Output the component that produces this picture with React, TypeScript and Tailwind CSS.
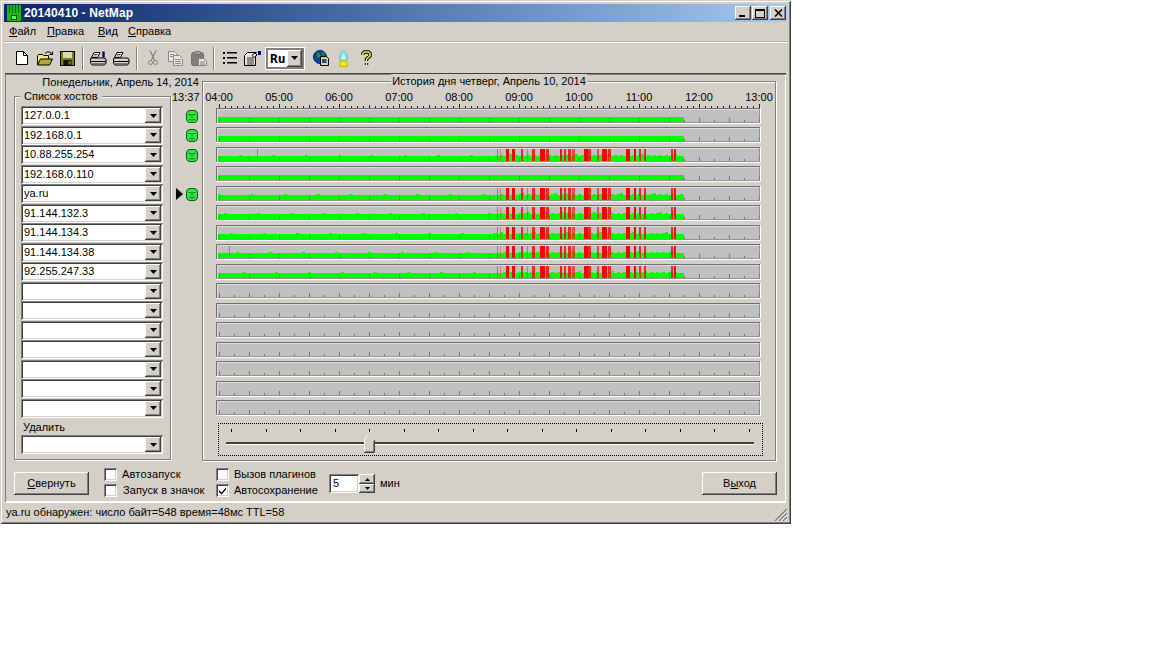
import React from 'react';

const raised = "shadow-[inset_-1px_-1px_0_#404040,inset_1px_1px_0_#ffffff,inset_-2px_-2px_0_#808080,inset_2px_2px_0_#d4d0c8]";
const sunken = "shadow-[inset_1px_1px_0_#808080,inset_-1px_-1px_0_#ffffff,inset_2px_2px_0_#404040,inset_-2px_-2px_0_#d4d0c8]";
const etched = "border border-[#808080] shadow-[inset_1px_1px_0_#ffffff,1px_1px_0_#ffffff]";

const hosts = ["127.0.0.1", "192.168.0.1", "10.88.255.254", "192.168.0.110", "ya.ru", "91.144.132.3", "91.144.134.3", "91.144.134.38", "92.255.247.33", "", "", "", "", "", "", ""];
const hours = ["04:00", "05:00", "06:00", "07:00", "08:00", "09:00", "10:00", "11:00", "12:00", "13:00"];

// [x, width, opacity], x is in window pixels
const spikes: number[][] = [
    [497, 1, 0.5], [500, 1, 0.35], [506, 3, 1], [512, 3, 1], [521, 2, 0.8], [527, 1, 0.4], [532, 3, 0.8],
    [540, 5, 1], [546, 3, 0.8], [560, 2, 0.9], [564, 2, 0.8], [568, 3, 0.8], [572, 3, 0.6], [584, 4, 1],
    [588, 3, 0.8], [597, 2, 0.6], [602, 5, 1], [608, 3, 0.8], [626, 4, 1], [634, 2, 1], [639, 2, 0.8],
    [644, 2, 0.8], [671, 2, 0.8], [674, 2, 0.9],
];

const rows = [
    { active: true, busy: false }, { active: true, busy: false }, { active: true, busy: true, extra: 257 }, { active: true, busy: false, noFace: true },
    { active: true, busy: true, mark: true }, { active: true, busy: true, noFace: true }, { active: true, busy: true, noFace: true }, { active: true, busy: true, extra: 229, noFace: true },
    { active: true, busy: true, noFace: true },
    {}, {}, {}, {}, {}, {}, {},
] as { active?: boolean; busy?: boolean; extra?: number; mark?: boolean; noFace?: boolean }[];

function Arrow() {
    return (
        <svg width="7" height="4" viewBox="0 0 7 4"><path d="M0 0h7L3.5 4z" fill="#000" /></svg>
    );
}

function Combo({ value }: { value: string }) {
    return (
        <div className={`h-[19px] w-[142px] bg-white flex items-center pl-[3px] pr-[2px] ${sunken}`}>
            <span className="flex-1 leading-none">{value}</span>
            <div className={`w-[16px] h-[15px] bg-[#d4d0c8] flex items-center justify-center ${raised}`}><Arrow /></div>
        </div>
    );
}

function Check({ on }: { on?: boolean }) {
    return (
        <div className={`w-[13px] h-[13px] bg-white flex items-center justify-center shrink-0 ${sunken}`}>
            {on && <svg width="9" height="9" viewBox="0 0 9 9"><path d="M1 4l2.5 2.5L8 1.5v2L3.5 8.5 1 6z" fill="#000" /></svg>}
        </div>
    );
}

function Face() {
    return (
        <svg width="12" height="13" viewBox="0 0 12 13">
            <rect x="0.5" y="0.5" width="11" height="12" rx="3.5" fill="#2ee83f" stroke="#0d5a1a" />
            <path d="M2.5 4.5h2.4M7.1 4.5h2.4M6 4.5v3M3.5 9.4q2.5 1.4 5 0" stroke="#0f6a1e" strokeWidth="1" fill="none" />
        </svg>
    );
}

function Bar({ row, index }: { row: typeof rows[number]; index: number }) {
    const W = 545;
    const H = 16;
    const ticks: React.ReactNode[] = [];
    for (let i = 0; i * 15 <= 540; i++) {
        const x = 3 + i * 15;
        const long = i % 2 === 0;
        const onGreen = row.active && x < 468;
        if (onGreen && !long) continue;
        ticks.push(<rect key={i} x={x} y={long ? H - 6 : H - 4} width="1" height={long ? 4 : 2} fill={onGreen ? "#0cc40c" : "#777"} />);
    }
    const bumps: React.ReactNode[] = [];
    if (row.busy) {
        for (let x = 2; x < 468; x += 3) {
            const seed = (x * 7 + index * 13) % 11;
            const heavy = x > 281 && x < 460;
            const h = heavy ? (seed % 2) + (seed > 8 ? 1 : 0) : seed === 0 ? 1 : 0;
            if (h > 0) bumps.push(<rect key={x} x={x} y={H - 7 - h} width="3" height={h} fill="#00ff00" />);
        }
    }
    return (
        <svg width={W} height={H} viewBox={`0 0 ${W} ${H}`} className="block">
            <rect width={W} height={H} fill="#c0c0c0" />
            {row.active && <rect x="2" y={H - 7} width="466" height="5" fill="#00ff00" />}
            {bumps}
            {row.busy && spikes.map((s, i) => (
                <rect key={i} x={s[0] - 216} y="2" width={s[1]} height={H - 4} fill="#ff0000" opacity={s[2]} />
            ))}
            {row.extra && <rect x={row.extra - 216} y="2" width="1" height="10" fill="#e05050" opacity="0.7" />}
            {ticks}
            <path d={`M0.5 ${H}V0.5H${W}`} stroke="#707070" fill="none" />
            <path d={`M1.5 ${H - 1}V1.5H${W - 1}`} stroke="#ffffff" strokeOpacity="0.45" fill="none" />
            <path d={`M0 ${H - 0.5}H${W - 0.5}V0`} stroke="#ffffff" fill="none" />
            <path d={`M2 ${H - 1.5}H${W - 1.5}V1`} stroke="#808080" strokeOpacity="0.7" fill="none" />
        </svg>
    );
}

function Ruler() {
    const t: React.ReactNode[] = [];
    for (let i = 0; i <= 90; i++) {
        const big = i % 10 === 0;
        const mid = i % 5 === 0;
        t.push(<rect key={i} x={3 + i * 6} y={big ? 0 : mid ? 1 : 2} width="1" height={big ? 4 : mid ? 3 : 2} fill="#222" />);
    }
    return <svg width="545" height="4" viewBox="0 0 545 4" className="block">{t}</svg>;
}

function ToolBtn({ children }: { children: React.ReactNode }) {
    return <div className="w-[23px] h-[23px] flex items-center justify-center shrink-0">{children}</div>;
}

function ToolSep() {
    return <div className="w-[8px] flex justify-center"><div className="w-[2px] h-[23px] ml-[-1px] border-l border-[#808080] border-r border-r-white" /></div>;
}

function PrinterIcon({ preview }: { preview?: boolean }) {
    return (
        <svg width="17" height="15" viewBox="0 0 17 15">
            <path d="M4 1.5h6l-2.5 5h-6z" fill="#fff" stroke="#000" />
            {preview && <path d="M13.5 0.5v6" stroke="#000080" strokeWidth="2.4" />}
            <path d="M1 7h13l2 1v4l-1.5 2H2l-1.5-2V8z" fill="#d4d0c8" stroke="#000" />
            <path d="M1 10.5h15" stroke="#000" />
            <path d="M4 3.5h4M3.5 5h3" stroke="#555" />
            <path d="M2 12.5h13" stroke="#777" />
        </svg>
    );
}

export default function App() {
    return (
        <div className="w-[791px] h-[524px] bg-[#d4d0c8] p-[4px] text-black text-[11px] font-['Liberation_Sans',sans-serif] shadow-[inset_1px_1px_0_#d4d0c8,inset_-1px_-1px_0_#404040,inset_2px_2px_0_#ffffff,inset_-2px_-2px_0_#808080]">
            {/* title bar */}
            <div className="h-[18px] flex items-center bg-gradient-to-r from-[#0a246a] to-[#a6caf0] pl-[3px] pr-[1px]">
                <svg width="14" height="16" viewBox="0 0 14 16" className="shrink-0">
                    <rect width="14" height="16" fill="#18b818" />
                    <path d="M2.5 0v8M5.5 0v8M8.5 0v8M11.5 0v8" stroke="#0a5a12" />
                    <rect x="4.5" y="10.5" width="5" height="4" fill="#5dff5d" stroke="#064006" />
                </svg>
                <span className="ml-[3px] flex-1 text-white font-bold text-[12px] leading-none tracking-[0.1px]">20140410 - NetMap</span>
                <div className="flex gap-[1px]">
                    <div className={`w-[16px] h-[14px] bg-[#d4d0c8] relative ${raised}`}><div className="mt-[9px] ml-[4px] w-[6px] h-[2px] bg-black" /></div>
                    <div className={`w-[16px] h-[14px] bg-[#d4d0c8] flex items-center justify-center mr-[1px] ${raised}`}><div className="w-[10px] h-[9px] border border-black border-t-2" /></div>
                    <div className={`w-[16px] h-[14px] bg-[#d4d0c8] flex items-center justify-center ${raised}`}>
                        <svg width="9" height="8" viewBox="0 0 9 8"><path d="M1 0.5L8 7.5M8 0.5L1 7.5" stroke="#000" strokeWidth="1.5" /></svg>
                    </div>
                </div>
            </div>

            {/* menu */}
            <div className="h-[20px] flex items-center pl-[5px] gap-[10px] border-b border-[#b4b0a8] leading-none">
                <span className="w-[28px]"><u>Ф</u>айл</span>
                <span className="w-[40px]"><u>П</u>равка</span>
                <span className="ml-[1px] w-[20px]"><u>В</u>ид</span>
                <span><u>С</u>правка</span>
            </div>

            {/* toolbar */}
            <div className="h-[31px] flex items-center pl-[6px] border-t border-white">
                <ToolBtn>
                    <svg width="12" height="14" viewBox="0 0 12 14"><path d="M0.5 0.5h7l4 4v9h-11z" fill="#fff" stroke="#000" /><path d="M7.5 0.5v4h4" fill="none" stroke="#000" /></svg>
                </ToolBtn>
                <ToolBtn>
                    <svg width="16" height="15" viewBox="0 0 16 15">
                        <path d="M0.5 14V4.5l1-1h4l1 1h5V8" fill="#f0e48a" stroke="#000" />
                        <path d="M0.5 14l3-6h12l-3 6z" fill="#b8a838" stroke="#000" />
                        <path d="M8 2.5q2-2.5 5-1.5l1.5 2M15.5 0.5v3h-3" fill="none" stroke="#000" />
                    </svg>
                </ToolBtn>
                <ToolBtn>
                    <svg width="15" height="15" viewBox="0 0 15 15">
                        <rect x="0.5" y="0.5" width="14" height="14" fill="#808000" stroke="#000" />
                        <rect x="3" y="1" width="9" height="6" fill="#d8d8b8" />
                        <rect x="3.5" y="9" width="8" height="5.5" fill="#111" />
                        <rect x="8.5" y="10" width="2" height="3.5" fill="#808000" />
                    </svg>
                </ToolBtn>
                <ToolSep />
                <ToolBtn><PrinterIcon preview /></ToolBtn>
                <ToolBtn><PrinterIcon /></ToolBtn>
                <ToolSep />
                <ToolBtn>
                    <svg width="10" height="16" viewBox="0 0 10 16" fill="none" stroke="#808080">
                        <path d="M2 0.5L6.5 10M8 0.5L3.5 10" strokeWidth="1.2" />
                        <circle cx="2.5" cy="12.5" r="2" />
                        <circle cx="7.5" cy="12.5" r="2" />
                    </svg>
                </ToolBtn>
                <ToolBtn>
                    <svg width="15" height="15" viewBox="0 0 15 15" fill="#e8e6e0" stroke="#8a8a8a">
                        <path d="M0.5 0.5h6l2 2v8h-8z" />
                        <path d="M5.5 4.5h6l3 3v7h-9z" />
                        <path d="M2 3.5h4M2 5.5h3M7 8.5h6M7 10.5h6M7 12.5h6" />
                    </svg>
                </ToolBtn>
                <ToolBtn>
                    <svg width="16" height="15" viewBox="0 0 16 15">
                        <rect x="0.5" y="1.5" width="12" height="13" rx="2" fill="#808080" stroke="#707070" />
                        <rect x="3.5" y="0.5" width="6" height="3" rx="1" fill="#a0a0a0" stroke="#707070" />
                        <path d="M7.5 7.5h5l3 2.5v4.5h-8z" fill="#e8e6e0" stroke="#808080" />
                        <path d="M9 11h5M9 13h5" stroke="#808080" />
                    </svg>
                </ToolBtn>
                <ToolSep />
                <ToolBtn>
                    <svg width="14" height="13" viewBox="0 0 14 13" fill="#000">
                        <rect x="0" y="0" width="2" height="2" /><rect x="0" y="5" width="2" height="2" /><rect x="0" y="10" width="2" height="2" />
                        <rect x="4" y="0" width="10" height="1.5" /><rect x="4" y="5" width="10" height="1.5" /><rect x="4" y="10" width="10" height="1.5" />
                    </svg>
                </ToolBtn>
                <ToolBtn>
                    <svg width="17" height="15" viewBox="0 0 17 15">
                        <path d="M0.5 4.5l3-3h9l-1 1v12h-11z" fill="#e8e6e0" stroke="#000" />
                        <path d="M3 7h7M3 9h7M3 11h7M3 13h7" stroke="#333" />
                        <path d="M8 4.5l3-2.5 2 2-3 2.5z" fill="#fff" stroke="#000" />
                        <rect x="14" y="0" width="3" height="4" fill="#000080" />
                    </svg>
                </ToolBtn>
                <div className="w-[40px] h-[23px] bg-white ml-[1px] p-[1px] mr-[4px] shrink-0">
                    <div className="w-full h-full bg-[#808080] p-[2px]">
                        <div className="w-full h-full bg-white flex items-center">
                            <span className="flex-1 pl-[2px] font-bold text-[13px] font-['DejaVu_Sans_Mono',monospace] leading-none">Ru</span>
                            <div className={`w-[15px] h-full bg-[#d4d0c8] flex items-center justify-center ${raised}`}><Arrow /></div>
                        </div>
                    </div>
                </div>
                <ToolBtn>
                    <svg width="16" height="16" viewBox="0 0 16 16">
                        <circle cx="7" cy="7" r="6.5" fill="#0a3fb0" stroke="#00205a" />
                        <path d="M4 2.5q3 0 3.5 2.5t-2.5 3L3.5 6zM8 1.5q3 .5 4.5 3L10 6z" fill="#2f8a3a" />
                        <path d="M7.5 6.5h6l2 2v7h-8z" fill="#d4d0a8" stroke="#000" />
                        <rect x="9" y="9" width="4.5" height="4" fill="#205a6a" />
                    </svg>
                </ToolBtn>
                <ToolBtn>
                    <svg width="11" height="17" viewBox="0 0 11 17">
                        <path d="M5.5 0.5q4.5 4 4 7.5t-4 3.5-4-3.5 4-7.5z" fill="#7ff0f0" stroke="#40c8d8" />
                        <path d="M5.5 4q2 3 1.5 5h-3q-.5-2 1.5-5z" fill="#e8ffff" />
                        <rect x="2" y="11" width="7" height="5.5" fill="#f8e820" stroke="#c8b000" />
                    </svg>
                </ToolBtn>
                <ToolBtn>
                    <svg width="11" height="16" viewBox="0 0 11 16" fill="none">
                        <path d="M2 5V3.5L3.5 2h4L9 3.5V6L5.5 9v2M5.5 13v2" stroke="#000" strokeWidth="3.4" />
                        <path d="M2 5V3.5L3.5 2h4L9 3.5V6L5.5 9v2M5.5 13v2" stroke="#f5f030" strokeWidth="1.5" />
                    </svg>
                </ToolBtn>
            </div>

            {/* main panel */}
            <div className="ml-[1px] w-[781px] h-[429px] shadow-[inset_1px_1px_0_#808080,inset_-1px_-1px_0_#ffffff,0_1px_0_#ffffff] border-t border-[#404040]">
                <div className="flex h-[387px]">
                    <div className="w-[197px] shrink-0 flex flex-col">
                        <div className="h-[22px] pt-[1px] pr-[3px] text-right leading-[15px]">Понедельник, Апрель 14, 2014</div>
                        <div className="flex">
                            <div className={`relative ml-[9px] w-[157px] h-[364px] ${etched} pl-[6px] pt-[9px]`}>
                                <span className="absolute -top-[8px] left-[5px] px-[4px] bg-[#d4d0c8] leading-[14px]">Список хостов</span>
                                <div className="grid grid-rows-[repeat(16,19.5px)] h-[312px]">
                                    {hosts.map((h, i) => (
                                        <div key={i} className="flex items-center"><Combo value={h} /></div>
                                    ))}
                                </div>
                                <div className="h-[15px] mt-[2px] ml-[2px] leading-[15px]">Удалить</div>
                                <div><Combo value="" /></div>
                            </div>
                            <div className="w-[31px] shrink-0">
                                <div className="h-[10px] -mt-[6px] mb-[6.5px] pl-[1px] leading-[14px]">13:37</div>
                                <div className="grid grid-rows-[repeat(16,19.5px)] h-[312px]">
                                    {rows.map((r, i) => (
                                        <div key={i} className="flex items-center justify-end pr-[4px] gap-[3px]">
                                            {r.mark && <svg width="7" height="12" viewBox="0 0 7 12"><path d="M0 0l7 6-7 6z" fill="#000" /></svg>}
                                            {r.active && !r.noFace && <Face />}
                                        </div>
                                    ))}
                                </div>
                            </div>
                        </div>
                    </div>

                    <div className={`relative mt-[7px] w-[574px] h-[380px] shrink-0 ${etched} flex flex-col`}>
                        <span className="absolute -top-[8px] left-1/2 -translate-x-1/2 px-[1px] bg-[#d4d0c8] leading-[14px] whitespace-nowrap">История дня четверг, Апрель 10, 2014</span>
                        <div className="h-[11px] mt-[8px] ml-[1px] w-[570px] flex justify-between leading-[14px]">
                            {hours.map((h) => <span key={h} className="w-[30px] text-center">{h}</span>)}
                        </div>
                        <div className="ml-[13px] mt-[3px]"><Ruler /></div>
                        <div className="ml-[13px] -mt-[2px] grid grid-rows-[repeat(16,19.5px)] h-[312px]">
                            {rows.map((r, i) => (
                                <div key={i} className="flex items-center"><Bar row={r} index={i} /></div>
                            ))}
                        </div>
                        <div className="relative ml-[15px] mt-[5px] w-[545px] h-[33px] border border-dotted border-black pt-[5px]">
                            <div className="flex justify-between pl-[12px] pr-[12px]">
                                {Array.from({ length: 16 }).map((_, i) => <div key={i} className="w-[1px] h-[3px] bg-black" />)}
                            </div>
                            <div className="ml-[7px] mr-[8px] mt-[10px] h-[3px] bg-[#404040] border-b border-white" />
                            <svg width="11" height="18" viewBox="0 0 11 18" className="absolute left-[145px] top-[11px]">
                                <path d="M0 4L4 0l7 5v13H0z" fill="#d4d0c8" />
                                <path d="M0.5 17V3.5L4 0.5" stroke="#fff" fill="none" />
                                <path d="M10.5 5v12.5H0" stroke="#404040" fill="none" />
                                <path d="M9.5 6v10.5H1" stroke="#808080" fill="none" />
                            </svg>
                        </div>
                    </div>
                </div>

                {/* bottom controls */}
                <div className="flex pt-[6px] pl-[9px] pr-[9px]">
                    <button className={`mt-[5px] w-[75px] h-[23px] bg-[#d4d0c8] ${raised}`}><u>С</u>вернуть</button>
                    <div className="ml-[15px] w-[112px] flex flex-col gap-[3px] pt-[1px]">
                        <div className="flex items-center gap-[5px] h-[13px]"><Check /><span className="tracking-[0.2px]">Автозапуск</span></div>
                        <div className="flex items-center gap-[6px] h-[13px]"><Check /><span className="tracking-[0.1px]">Запуск в значок</span></div>
                    </div>
                    <div className="w-[113px] flex flex-col gap-[3px] pt-[1px]">
                        <div className="flex items-center gap-[5px] h-[13px]"><Check /><span>Вызов плагинов</span></div>
                        <div className="flex items-center gap-[5px] h-[13px]"><Check on /><span>Автосохранение</span></div>
                    </div>
                    <div className="mt-[7px] flex items-start h-[19px]">
                        <div className={`w-[30px] h-[19px] bg-white pl-[4px] leading-[19px] ${sunken}`}>5</div>
                        <div className="w-[16px] h-[19px] flex flex-col">
                            <div className={`h-[10px] bg-[#d4d0c8] flex items-center justify-center ${raised}`}><svg width="5" height="3" viewBox="0 0 5 3"><path d="M0 3h5L2.5 0z" fill="#000" /></svg></div>
                            <div className={`h-[9px] bg-[#d4d0c8] flex items-center justify-center ${raised}`}><svg width="5" height="3" viewBox="0 0 5 3"><path d="M0 0h5L2.5 3z" fill="#000" /></svg></div>
                        </div>
                        <span className="ml-[5px] leading-[19px]">мин</span>
                    </div>
                    <button className={`ml-auto mt-[5px] w-[75px] h-[23px] bg-[#d4d0c8] ${raised}`}>В<u>ы</u>ход</button>
                </div>
            </div>

            {/* status bar */}
            <div className="h-[18px] mt-[1px] flex items-center justify-between pl-[2px] leading-none">
                <span>ya.ru обнаружен: число байт=548 время=48мс TTL=58</span>
                <svg width="13" height="13" viewBox="0 0 13 13" className="self-end">
                    <path d="M13 1L1 13M13 5L5 13M13 9L9 13" stroke="#808080" strokeWidth="1.4" />
                    <path d="M13 3L3 13M13 7L7 13M13 11L11 13" stroke="#ffffff" />
                </svg>
            </div>
        </div>
    );
}
